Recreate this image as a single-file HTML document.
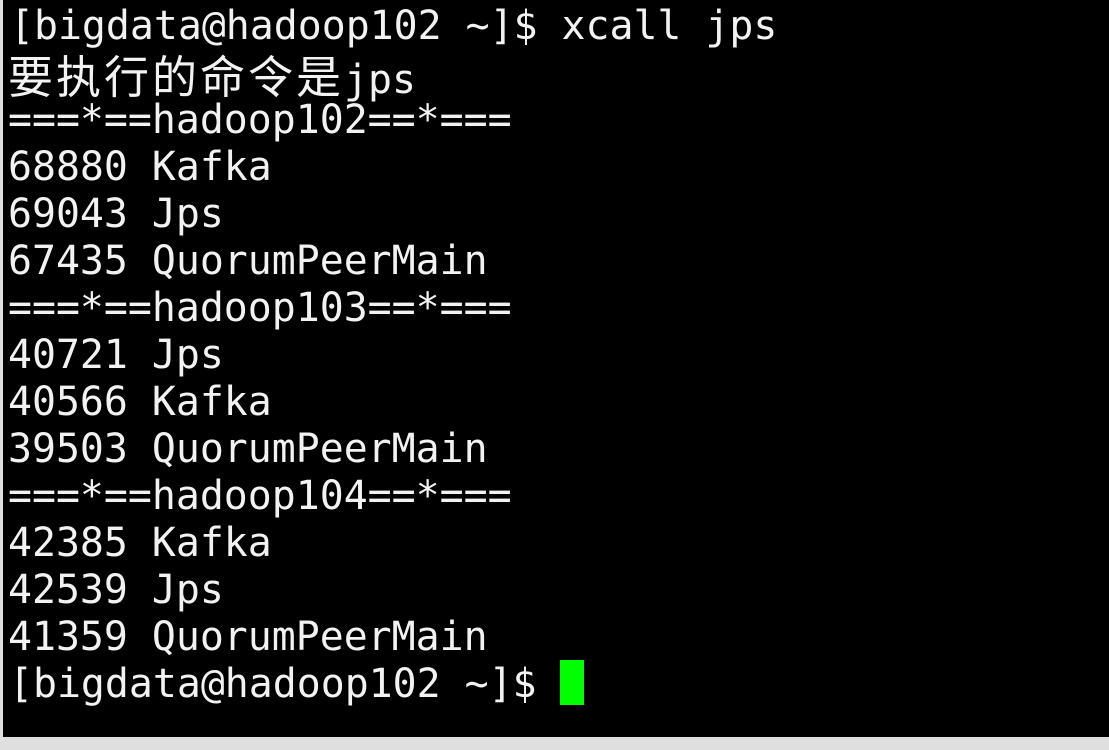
<!DOCTYPE html>
<html><head><meta charset="utf-8"><style>
html,body{margin:0;padding:0;width:1109px;height:750px;overflow:hidden;background:#dfdfdf}
#t{position:absolute;left:3px;top:0;width:1106px;height:737px;background:#000;overflow:hidden}
.p{position:absolute;left:5px;top:3px;color:#f2f2f2;font-family:"DejaVu Sans Mono","Liberation Mono","Noto Sans CJK SC",monospace;font-size:39.85px}
.p div{height:47px;line-height:47px;white-space:pre;overflow:visible}
.cj{font-family:'Noto Sans CJK SC',sans-serif;font-size:45px;letter-spacing:3px;line-height:47px}
.c{position:absolute;left:557px;top:660px;width:24px;height:45px;background:#00ff00}
</style></head><body><div id="t"><div class="p"><div style="padding-left:2px">[bigdata@hadoop102 ~]$ xcall jps</div><div><span class="cj">要执行的命令是</span>jps</div><div>===*==hadoop102==*===</div><div>68880 Kafka</div><div>69043 Jps</div><div>67435 QuorumPeerMain</div><div>===*==hadoop103==*===</div><div>40721 Jps</div><div>40566 Kafka</div><div>39503 QuorumPeerMain</div><div>===*==hadoop104==*===</div><div>42385 Kafka</div><div>42539 Jps</div><div>41359 QuorumPeerMain</div><div style="padding-left:1px">[bigdata@hadoop102 ~]$ </div></div><div class="c"></div></div></body></html>
